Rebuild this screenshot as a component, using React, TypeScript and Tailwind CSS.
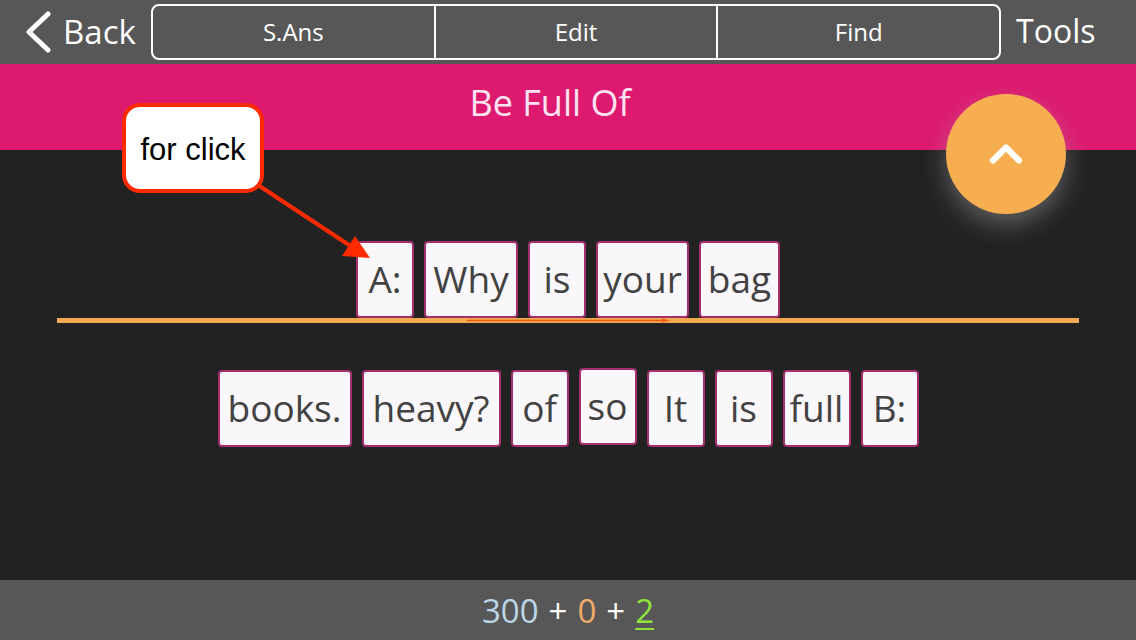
import { ChevronUp } from 'lucide-react';

const questionWords = [
  { id: 'a', text: 'A:', w: 'w-[58px]' },
  { id: 'why', text: 'Why', w: 'w-[94px]' },
  { id: 'is1', text: 'is', w: 'w-[58px]' },
  { id: 'your', text: 'your', w: 'w-[93px]' },
  { id: 'bag', text: 'bag', w: 'w-[81px]' },
];

const answerWords = [
  { id: 'books', text: 'books.', w: 'w-[134px]', lift: false },
  { id: 'heavy', text: 'heavy?', w: 'w-[139px]', lift: false },
  { id: 'of', text: 'of', w: 'w-[58px]', lift: false },
  { id: 'so', text: 'so', w: 'w-[58px]', lift: true },
  { id: 'it', text: 'It', w: 'w-[58px]', lift: false },
  { id: 'is2', text: 'is', w: 'w-[58px]', lift: false },
  { id: 'full', text: 'full', w: 'w-[68px]', lift: false },
  { id: 'b', text: 'B:', w: 'w-[58px]', lift: false },
];

const tabs = ['S.Ans', 'Edit', 'Find'];

const Tile = ({ text, w, lift }: { text: string; w: string; lift?: boolean }) => (
  <div
    className={`${w} ${lift ? 'mb-[4px]' : ''} h-[77px] flex items-center justify-center rounded-[4px] border-2 border-[#a3306f] bg-[#f9f7f9] text-[37px] leading-none text-[#424242] pb-[2px]`}
  >
    {text}
  </div>
);

const App = () => {
  return (
    <div
      className="relative w-[1136px] h-[640px] flex flex-col bg-[#222222] overflow-hidden"
      style={{ fontFamily: '"Open Sans", "Liberation Sans", sans-serif' }}
    >
      {/* Nav bar */}
      <header className="h-16 flex items-center bg-[#575757] text-white pl-[24px]">
        <div className="w-[127px] flex items-center">
          <svg width="28" height="42" viewBox="0 0 28 42" fill="none">
            <polyline points="24,3 5,21 24,39" stroke="white" strokeWidth="5" strokeLinecap="round" strokeLinejoin="round" />
          </svg>
          <span className="text-[33px] leading-none ml-[11px] pb-[2px]">Back</span>
        </div>
        <nav className="w-[850px] h-[56px] flex rounded-[8px] border-2 border-white">
          {tabs.map((tab, i) => (
            <button
              key={tab}
              className={`flex-1 flex items-center justify-center text-[24px] ${i > 0 ? 'border-l-2 border-white' : ''}`}
            >
              {tab}
            </button>
          ))}
        </nav>
        <span className="ml-[15px] text-[32px] leading-none pb-[2px]">Tools</span>
      </header>

      {/* Title band */}
      <div className="h-[86px] flex items-center justify-center bg-[#dd1a70] pr-[36px]">
        <h1 className="text-[36px] leading-none text-[#fde3f2] pb-[8px]">Be Full Of</h1>
      </div>

      {/* Sentence board */}
      <main className="flex-1 flex flex-col pt-[91px]">
        <div className="flex justify-center gap-[10px]">
          {questionWords.map((word) => (
            <Tile key={word.id} text={word.text} w={word.w} />
          ))}
        </div>
        <div className="relative mx-[57px] h-[5px] bg-[#f2a94f]">
          <svg className="absolute left-[410px] top-0" width="204" height="5" viewBox="0 0 204 5">
            <line x1="0" y1="2.5" x2="198" y2="2.5" stroke="#f05a12" strokeWidth="1.5" />
            <polygon points="195,0.5 203,2.5 195,4.5" fill="#f05a12" />
          </svg>
        </div>
        <div className="flex justify-center items-center gap-[10px] mt-[45px]">
          {answerWords.map((word) => (
            <Tile key={word.id} text={word.text} w={word.w} lift={word.lift} />
          ))}
        </div>
      </main>

      {/* Score bar */}
      <footer className="h-[60px] flex items-center justify-center bg-[#575757] text-[33px] leading-none text-white">
        <span className="text-[#bcd6e8]">300</span>
        <span className="mx-[10px]">+</span>
        <span className="text-[#f2ac6a]">0</span>
        <span className="mx-[10px]">+</span>
        <span className="text-[#8ee33a] underline underline-offset-[5px] decoration-2">2</span>
      </footer>

      {/* Scroll-up button */}
      <button className="absolute left-[946px] top-[94px] w-[120px] h-[120px] rounded-full bg-[#f6ae50] flex items-center justify-center shadow-[0_10px_24px_rgba(170,170,170,0.45)]">
        <ChevronUp className="w-[52px] h-[52px] text-white" strokeWidth={2.8} />
      </button>

      {/* Annotation callout */}
      <div className="absolute left-[122px] top-[103px] w-[142px] h-[90px] rounded-[18px] border-[4px] border-[#ff2a00] bg-white flex items-center justify-center">
        <span className="text-[31px] leading-none text-black pt-[3px]" style={{ fontFamily: '"Liberation Sans", Arial, sans-serif' }}>
          for click
        </span>
      </div>
      <svg className="absolute left-0 top-0 pointer-events-none" width="1136" height="640" viewBox="0 0 1136 640">
        <line x1="258" y1="185" x2="352" y2="247" stroke="#ff2a00" strokeWidth="4" />
        <polygon points="370,258 342,256 355,236" fill="#ff2a00" />
      </svg>
    </div>
  );
};

export default App;
